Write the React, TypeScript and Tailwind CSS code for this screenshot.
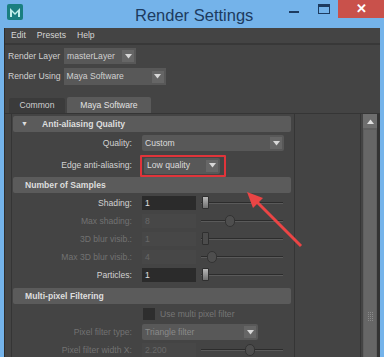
import React from "react";

const font = { fontFamily: '"Liberation Sans", Arial, sans-serif' };

function Arrow() {
  return (
    <svg width="7" height="5" viewBox="0 0 7 5" aria-hidden="true">
      <path d="M0 0H7L3.5 4.5Z" fill="#d8d8d8" />
    </svg>
  );
}

function Dropdown({ value, width, disabled = false }: { value: string; width: string; disabled?: boolean }) {
  return (
    <div
      className={`flex h-[16px] items-center rounded-[2px] bg-[#585858] ${width} ${
        disabled ? "text-[#8a8a8a]" : "text-[#dcdcdc]"
      }`}
    >
      <span className="flex-1 truncate px-[3px]">{value}</span>
      <span className="mr-[2px] flex h-[12px] w-[12px] items-center justify-center bg-[#666]">
        <Arrow />
      </span>
    </div>
  );
}

function Slider({ pos, round = false, disabled = false }: { pos: number; round?: boolean; disabled?: boolean }) {
  return (
    <div className="relative ml-[5px] h-[14px] w-[82px]">
      <div className="absolute left-0 right-0 top-[6px] h-[2px] bg-[#2c2c2c] border-b border-[#5a5a5a]" />
      {round ? (
        <div
          className={`absolute top-[1px] h-[12px] w-[10px] rounded-full border border-[#333] ${
            disabled ? "bg-[#4e4e4e]" : "bg-[#8a8a8a]"
          }`}
          style={{ left: pos }}
        />
      ) : (
        <div
          className={`absolute top-0 h-[13px] w-[7px] rounded-[1px] border border-[#2f2f2f] ${
            disabled ? "bg-[#4c4c4c]" : "bg-gradient-to-b from-[#b8b8b8] to-[#707070]"
          }`}
          style={{ left: pos }}
        />
      )}
    </div>
  );
}

function Row({ label, disabled = false, children }: { label: string; disabled?: boolean; children: React.ReactNode }) {
  return (
    <div className="flex h-[18px] items-center">
      <div className={`w-[120px] pr-[1px] text-right ${disabled ? "text-[#727272]" : "text-[#d2d2d2]"}`}>
        {label}:
      </div>
      <div className="ml-[9px] flex items-center">{children}</div>
    </div>
  );
}

function NumField({ value, disabled = false }: { value: string; disabled?: boolean }) {
  return (
    <div
      className={`flex h-[14px] w-[54px] items-center px-[3px] ${
        disabled ? "bg-[#474747] text-[#676767]" : "bg-[#2b2b2b] text-[#e0e0e0]"
      }`}
    >
      {value}
    </div>
  );
}

function Header({ title, arrow = false }: { title: string; arrow?: boolean }) {
  return (
    <div className="flex h-[16px] w-[278px] items-center rounded-[2px] bg-[#5b5b5b] font-bold text-[#dedede]">
      {arrow ? (
        <>
          <span className="ml-[8px] mr-[14px] text-[7px]">▼</span>
          {title}
        </>
      ) : (
        <span className="ml-[12px]">{title}</span>
      )}
    </div>
  );
}

export default function App() {
  return (
    <div className="relative flex h-[357px] w-[384px] flex-col overflow-hidden bg-[#74b3ea] text-[8.6px]" style={font}>
      {/* Title bar */}
      <div className="flex h-[28px] shrink-0 items-start">
        <div className="ml-[7px] mt-[4px] h-[16px] w-[16px] shrink-0">
          <svg width="16" height="16" viewBox="0 0 16 16" aria-hidden="true">
            <rect width="16" height="16" rx="2" fill="#1a7f80" />
            <path d="M3 13V4L8 9L13 4V13H11V8L8 11L5 8V13Z" fill="#bfeee9" />
          </svg>
        </div>
        <div className="ml-[112px] mt-[3px] whitespace-nowrap text-[16.5px] text-[#1d3b60]">Render Settings</div>
        <div className="ml-auto mt-[11px] h-[2px] w-[10px] shrink-0 bg-[#1d3b60]" />
        <div className="ml-[19px] mt-[4px] h-[10px] w-[12px] shrink-0 border border-t-[3px] border-[#1d3b60]" />
        <div className="ml-[8px] flex h-[18px] w-[46px] shrink-0 items-center justify-center bg-[#c9514b] text-[13px] font-bold text-white">
          ✕
        </div>
      </div>

      {/* Window body */}
      <div className="ml-[4px] mr-[4px] flex flex-1 flex-col border-l border-[#2d2d2d] bg-[#444] text-[#d0d0d0]">
        {/* Menu */}
        <div className="flex h-[17px] items-center gap-[11px] border-b-[2px] border-[#383838] pl-[6px] text-[#d6d6d6]">
          <span>Edit</span>
          <span>Presets</span>
          <span>Help</span>
        </div>

        <div className="flex h-[20px] items-center pl-[3px] pt-[2px]">
          <span>Render Layer</span>
          <div className="ml-[4px] flex h-[16px] w-[72px] items-center bg-[#585858]">
            <span className="flex-1 px-[3px]">masterLayer</span>
            <span className="mr-[2px] flex h-[12px] w-[12px] items-center justify-center bg-[#666]">
              <Arrow />
            </span>
          </div>
        </div>
        <div className="flex h-[23px] items-center pl-[3px]">
          <span>Render Using</span>
          <div className="ml-[3px] flex h-[17px] w-[102px] items-center bg-[#585858]">
            <span className="flex-1 px-[3px]">Maya Software</span>
            <span className="mr-[2px] flex h-[12px] w-[12px] items-center justify-center bg-[#666]">
              <Arrow />
            </span>
          </div>
        </div>

        {/* Tabs */}
        <div className="mt-[10px] flex h-[16px] items-end border-b border-[#353535] pl-[4px]">
          <div className="flex h-[15px] w-[56px] items-center justify-center rounded-t-[2px] bg-[#3b3b3b] text-[#cfcfcf]">
            Common
          </div>
          <div className="ml-[2px] flex h-[16px] w-[84px] items-center justify-center rounded-t-[2px] bg-[#5a5a5a] text-[#e2e2e2]">
            Maya Software
          </div>
        </div>

        {/* Tab content */}
        <div className="flex flex-1 overflow-hidden">
          <div className="ml-[6px] flex w-[284px] flex-col border-l border-r border-[#353535] pl-[1px] pt-[2px]">
            <Header title="Anti-aliasing Quality" arrow />
            <div className="pt-[1px]">
              <div className="flex h-[19px] items-center pt-[1px]">
                <div className="w-[120px] pr-[1px] text-right text-[#d2d2d2]">Quality:</div>
                <div className="ml-[9px] flex items-center">
                  <Dropdown value="Custom" width="w-[142px]" />
                </div>
              </div>
              <div className="mt-[2px] flex h-[23px] items-center">
                <div className="w-[120px] pr-[1px] text-right text-[#d2d2d2]">Edge anti-aliasing:</div>
                <div className="ml-[7px] flex h-[22px] w-[86px] items-center rounded-[1px] border-[2px] border-[#e0343a] px-[2px]">
                  <Dropdown value="Low quality" width="w-[76px]" />
                </div>
              </div>
            </div>
            <Header title="Number of Samples" />
            <div className="pt-[1px]">
              <Row label="Shading">
                <NumField value="1" />
                <Slider pos={1} />
              </Row>
              <Row label="Max shading" disabled>
                <NumField value="8" disabled />
                <Slider pos={24} round disabled />
              </Row>
              <Row label="3D blur visib." disabled>
                <NumField value="1" disabled />
                <Slider pos={1} disabled />
              </Row>
              <Row label="Max 3D blur visib." disabled>
                <NumField value="4" disabled />
                <Slider pos={6} round disabled />
              </Row>
              <Row label="Particles">
                <NumField value="1" />
                <Slider pos={1} />
              </Row>
            </div>
            <div className="mt-[4px]">
              <Header title="Multi-pixel Filtering" />
            </div>
            <div className="pt-[1px]">
              <div className="flex h-[18px] items-center">
                <div className="ml-[130px] h-[12px] w-[12px] bg-[#2e2e2e]" />
                <span className="ml-[5px] text-[#767676]">Use multi pixel filter</span>
              </div>
              <Row label="Pixel filter type" disabled>
                <Dropdown value="Triangle filter" width="w-[116px]" disabled />
              </Row>
              <Row label="Pixel filter width X" disabled>
                <NumField value="2.200" disabled />
                <Slider pos={44} round disabled />
              </Row>
            </div>
          </div>

          <div className="flex-1 border-r border-[#353535]" />

          {/* Scrollbar */}
          <div className="ml-[2px] flex w-[14px] flex-col bg-[#5e5e5e]">
            <div className="flex h-[14px] items-center justify-center bg-[#6e6e6e]">
              <svg width="7" height="5" viewBox="0 0 7 5" aria-hidden="true">
                <path d="M0 5H7L3.5 0.5Z" fill="#e0e0e0" />
              </svg>
            </div>
            <div className="mx-[1px] mt-[2px] flex flex-1 flex-col items-center justify-end bg-[#666] pb-[38px]">
              <div className="grid grid-cols-3 gap-[1px]">
                {Array.from({ length: 15 }).map((_, i) => (
                  <div key={i} className="h-[1px] w-[1px] bg-[#8a8a8a]" />
                ))}
              </div>
            </div>
          </div>
          <div className="w-[3px] bg-[#333]" />
        </div>
      </div>

      {/* Annotation arrow */}
      <svg className="pointer-events-none absolute left-0 top-0" width="384" height="357" aria-hidden="true">
        <line x1="301" y1="246" x2="253" y2="198" stroke="#ea4545" strokeWidth="3" />
        <path d="M247 192L263 198L253 208Z" fill="#ea4545" />
      </svg>
    </div>
  );
}
